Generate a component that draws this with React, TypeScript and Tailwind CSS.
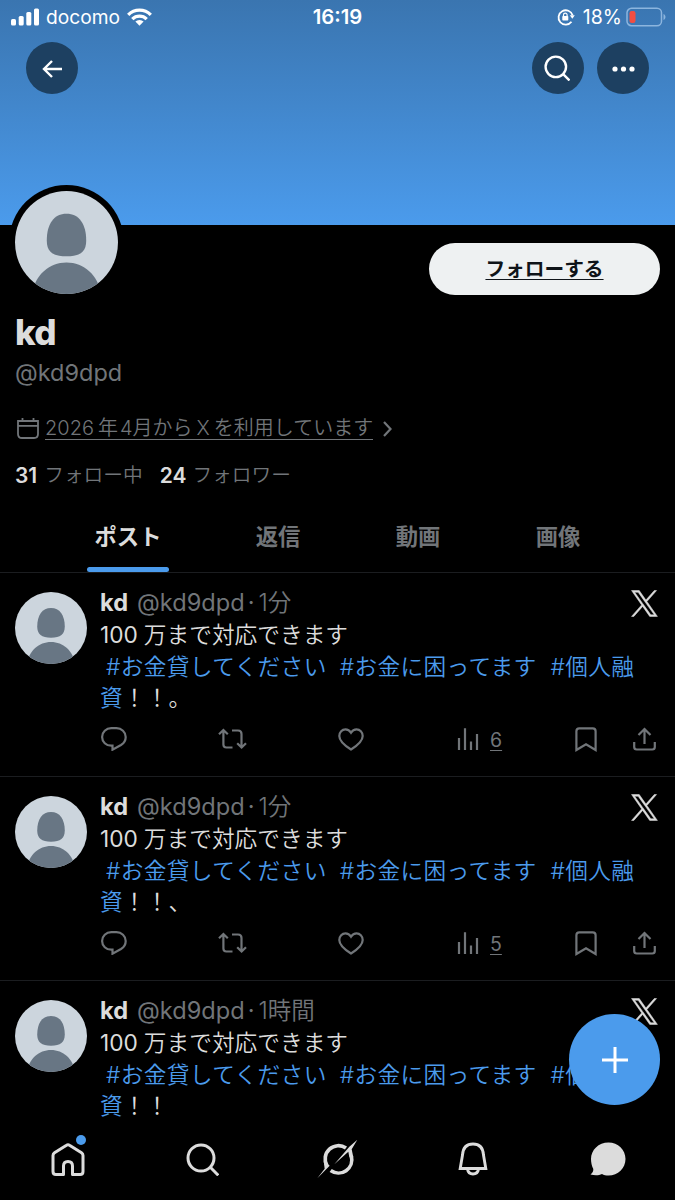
import React from 'react';

interface Post {
  id: number;
  time: string;
  tail: string;
  views: number;
}

const posts: Post[] = [
  { id: 1, time: '1分', tail: '！！。', views: 6 },
  { id: 2, time: '1分', tail: '！！、', views: 5 },
  { id: 3, time: '1時間', tail: '！！', views: 3 },
];

const tabs = ['ポスト', '返信', '動画', '画像'];

const Avatar: React.FC<{ className: string }> = ({ className }) => (
  <svg viewBox="0 0 103 103" className={className}>
    <defs>
      <clipPath id="face">
        <circle cx="51.5" cy="51.5" r="51.5" />
      </clipPath>
    </defs>
    <g clipPath="url(#face)">
      <rect width="103" height="103" fill="#ccd5dd" />
      <path d="M51.5 22.8C64 22.8 71.200 33 71.200 49.500C71.200 61 65 65.300 51.500 65.300S31.800 61 31.800 49.500C31.800 33 39 22.800 51.500 22.800z" fill="#687684" />
      <path d="M17 103C20 84 34 71.500 51.500 71.500S83 84 86 103z" fill="#687684" />
    </g>
  </svg>
);

const SearchIcon: React.FC<{ className: string; weight: number }> = ({ className, weight }) => (
  <svg viewBox="0 0 33 33" className={className} fill="none" stroke="currentColor" strokeWidth={weight}>
    <circle cx="15" cy="15" r="13" />
    <path d="M24.300 24.300l8 8" />
  </svg>
);

const StatusBar: React.FC = () => (
  <div className="grid h-9 grid-cols-3 items-center pb-0.5 text-white">
    <div className="flex items-center pl-[11px]">
      <svg viewBox="0 0 28 18" className="h-[18px] w-7" fill="currentColor">
        <rect x="0" y="11" width="5" height="6.500" rx="1.500" />
        <rect x="7.700" y="8" width="5" height="9.500" rx="1.500" />
        <rect x="15.300" y="4" width="5" height="13.500" rx="1.500" />
        <rect x="23" y="0.500" width="5" height="17" rx="1.500" />
      </svg>
      <span className="ml-[7px] text-[19.200px] leading-6">docomo</span>
      <svg viewBox="0 0 25 18" className="ml-[7px] h-[18px] w-[25px]" fill="none" stroke="currentColor" strokeWidth="3.300">
        <path d="M1.200 6.800a16 16 0 0 1 22.600 0" />
        <path d="M5.300 11.100a10.200 10.200 0 0 1 14.400 0" />
        <path d="M12.500 17.800l-4.100-4.200a5.800 5.800 0 0 1 8.200 0z" fill="currentColor" stroke="none" />
      </svg>
    </div>
    <div className="text-center text-[20.300px] font-semibold leading-6">16:19</div>
    <div className="flex items-center justify-end pr-[9px]">
      <svg viewBox="0 0 18 18" className="h-[18px] w-[18px]" fill="none" stroke="currentColor" strokeWidth="1.800">
        <path d="M14.500 13.800A7.200 7.200 0 1 1 15.600 7.300" />
        <path d="M12.800 7.200h5l-2.500 3.600z" fill="currentColor" stroke="none" />
        <rect x="5.300" y="8" width="6" height="4.500" rx="0.800" fill="currentColor" stroke="none" />
        <path d="M6.500 8.500V6.900a1.800 1.800 0 0 1 3.600 0v1.600" strokeWidth="1.200" />
      </svg>
      <span className="ml-2 text-[19.500px] leading-6">18%</span>
      <svg viewBox="0 0 40 20" className="ml-1 h-5 w-10" fill="none">
        <rect x="1" y="1.300" width="34.500" height="17.400" rx="4.500" stroke="#8cb5de" strokeWidth="1.500" />
        <rect x="3.500" y="4" width="6" height="12" rx="2.300" fill="#f24e42" />
        <path d="M37.500 7c2.600 1 2.600 5 0 6z" fill="#8cb5de" />
      </svg>
    </div>
  </div>
);

const Banner: React.FC = () => (
  <div className="h-[225px] bg-gradient-to-b from-[#3a75b0] to-[#4b9bec]">
    <StatusBar />
    <div className="flex justify-between px-[26px] pt-1.5 text-white">
      <button className="flex h-[52px] w-[52px] items-center justify-center rounded-full bg-[#1d4061]">
        <svg viewBox="0 0 20 18" className="mt-px h-[18px] w-5" fill="none" stroke="currentColor" strokeWidth="2.400">
          <path d="M20 9H1.800M10 1L2 9l8 8" />
        </svg>
      </button>
      <div className="flex gap-[13px]">
        <button className="flex h-[52px] w-[52px] items-center justify-center rounded-full bg-[#1d4061]">
          <SearchIcon className="mr-0.5 h-[26px] w-[26px]" weight={3} />
        </button>
        <button className="flex h-[52px] w-[52px] items-center justify-center rounded-full bg-[#1d4061]">
          <svg viewBox="0 0 23 6" className="mt-px h-1.5 w-[23px]" fill="currentColor">
            <circle cx="3" cy="3" r="2.600" />
            <circle cx="11.500" cy="3" r="2.600" />
            <circle cx="20" cy="3" r="2.600" />
          </svg>
        </button>
      </div>
    </div>
  </div>
);

const Profile: React.FC = () => (
  <section className="h-[290px] px-[15px]">
    <div className="flex h-[84px] items-start justify-between">
      <div className="relative -ml-1.5 -mt-10 rounded-full bg-black p-1.5">
        <Avatar className="h-[103px] w-[103px]" />
      </div>
      <button className="mt-[18px] h-[52px] w-[231px] rounded-full bg-[#eef1f2] pt-0.5 text-[19.700px] font-bold text-[#0f1419] underline decoration-1 underline-offset-[3px]">
        フォローする
      </button>
    </div>
    <h1 className="mt-[3px] text-[35px] font-extrabold leading-10 tracking-[-0.8px] text-[#dcdcdc]">kd</h1>
    <p className="mt-[5px] text-[23.500px] leading-8 text-[#717579]">@kd9dpd</p>
    <div className="mt-6 flex h-8 items-center text-[#717579]">
      <svg viewBox="0 0 22 22" className="ml-0.5 h-[22px] w-[22px]" fill="none" stroke="currentColor" strokeWidth="1.800">
        <path d="M1 3h20v13q0 4-4 4H5q-4 0-4-4zM1 7.800h20M5.500 0v3M16.500 0v3" />
      </svg>
      <span className="-mt-px ml-1.5 whitespace-nowrap border-b border-[#717579] text-[20px] font-[350] leading-[22px]">
        2026<span className="ml-1">年</span><span className="ml-0.5">4</span>月から<span className="mx-1">X</span>を利用しています
      </span>
      <svg viewBox="0 0 9 16" className="-mt-px ml-2.5 h-4 w-[9px]" fill="none" stroke="currentColor" strokeWidth="2.200">
        <path d="M1 1l6.500 7L1 15" />
      </svg>
    </div>
    <div className="mt-[15px] flex h-8 items-center whitespace-nowrap text-[19.700px] text-[#717579]">
      <b className="text-[21px] font-semibold text-[#dcdcdc]">31</b>
      <span className="ml-[7px] font-[350]">フォロー中</span>
      <b className="ml-[17px] text-[21px] font-semibold text-[#dcdcdc]">24</b>
      <span className="ml-1.5 font-[350]">フォロワー</span>
    </div>
  </section>
);

const Tabs: React.FC = () => (
  <nav className="flex h-[58px] gap-[58px] border-b border-[#1b1d20] pl-[87px]">
    {tabs.map((tab, i) => (
      <div
        key={tab}
        className={
          i === 0
            ? 'mr-2.5 flex w-[82px] flex-col items-center justify-between text-[22.300px] font-bold text-[#dcdcdc]'
            : 'flex w-[82px] flex-col items-center justify-between text-[22.300px] font-bold text-[#717579]'
        }
      >
        <span className="mt-1.5 whitespace-nowrap leading-8">{tab}</span>
        {i === 0 && <span className="h-[5px] w-[82px] rounded-full bg-[#4b9bec]" />}
      </div>
    ))}
  </nav>
);

const XLogo: React.FC = () => (
  <svg viewBox="-0.500 -0.500 25 25" className="h-[27px] w-[27px]" fill="#dcdcdc" stroke="#dcdcdc" strokeWidth="0.500">
    <path d="M14.258 10.152L23.176 0h-2.113l-7.747 8.813L7.133 0H0l9.352 13.328L0 23.973h2.113l8.176-9.309 6.531 9.309h7.133zm-2.895 3.293l-.949-1.328L2.875 1.560h3.246l6.086 8.523.945 1.328 7.910 11.078h-3.246z" />
  </svg>
);

const Actions: React.FC<{ views: number }> = ({ views }) => (
  <div className="flex h-6 w-[557px] items-center text-[#717579]">
    <svg viewBox="0 0 26 24" className="ml-px h-6 w-[26px]" fill="none" stroke="currentColor" strokeWidth="2.200">
      <path d="M10.300 1.200h5.200c5 0 9.200 3.800 9.200 8.800 0 3.500-1.800 6.300-4.700 8l-8.500 4.700v-4h-1.200c-5.200 0-9.200-3.800-9.200-8.700s4-8.800 9.200-8.800z" />
    </svg>
    <svg viewBox="0 0 30 22" className="ml-[91px] h-[22px] w-[30px]" fill="none" stroke="currentColor" strokeWidth="2.200">
      <path d="M1 6.300l4.400-4.300 4.400 4.300M5.400 2.500v14q0 3 3 3H14.500M14 2.500h6q3.500 0 3.500 3.500v13.500M19.200 15.200l4.400 4.300 4.400-4.300" />
    </svg>
    <svg viewBox="0 0 26 23" className="ml-[90px] h-[23px] w-[26px]" fill="none" stroke="currentColor" strokeWidth="2.200">
      <path d="M13 21.500C5 16.500 1.300 12.500 1.300 8c0-4 2.900-6.700 6.100-6.700 2.400 0 4.400 1.300 5.600 3.300 1.200-2 3.200-3.300 5.600-3.300 3.200 0 6.100 2.700 6.100 6.700 0 4.500-3.700 8.500-11.700 13.500z" />
    </svg>
    <svg viewBox="0 0 22 24" className="ml-[93px] h-6 w-[22px]" fill="none" stroke="currentColor" strokeWidth="2.200">
      <path d="M2 23V11M8 23V1.300M14 23v-8.500M20 23V7" />
    </svg>
    <span className="ml-[11px] mt-0.5 w-4 text-[19.500px] leading-6 underline decoration-1 underline-offset-[3px]">{views}</span>
    <svg viewBox="0 0 22 25" className="ml-[69px] h-[25px] w-[22px]" fill="none" stroke="currentColor" strokeWidth="2.200">
      <path d="M1.400 23V4.200q0-2.800 2.800-2.800h13.600q2.800 0 2.800 2.800V23L11 17.200z" />
    </svg>
    <svg viewBox="0 0 23 24" className="ml-9 h-6 w-[23px]" fill="none" stroke="currentColor" strokeWidth="2.200">
      <path d="M11.500 17V2M5.500 8l6-6 6 6M1.200 15v5q0 2.500 2.500 2.500h15.600q2.500 0 2.500-2.500v-5" />
    </svg>
  </div>
);

const PostItem: React.FC<{ post: Post }> = ({ post }) => (
  <article className="flex h-[204px] shrink-0 border-b border-[#1b1d20] pl-[15px] pr-[17px] pt-[17px]">
    <Avatar className="mt-0.5 h-[72px] w-[72px] shrink-0" />
    <div className="ml-[13px] flex-1">
      <div className="flex h-[26px] justify-between">
        <div className="flex items-center whitespace-nowrap text-[23.600px] leading-6 text-[#717579]">
          <b className="font-bold text-[#dcdcdc]">kd</b>
          <span className="ml-[9px]">@kd9dpd</span>
          <span className="ml-[3px]">·</span>
          <span className="ml-1 text-[23.500px] font-[350]">{post.time}</span>
        </div>
        <XLogo />
      </div>
      <p className="mt-[3px] whitespace-nowrap text-[22.700px] font-[350] leading-[31.700px] text-[#dcdcdc]">
        <span className="mr-1.5 font-normal">100</span>万まで対応できます
        <br />
        <span className="tracking-[0.350px] text-[#4b9bec]">
          <span className="ml-1.5">#お金貸してください</span>
          <span className="ml-[13px]">#お金に困ってます</span>
          <span className="ml-3.5">#個人融</span>
          <br />資
        </span>
        {post.tail}
      </p>
      <div className="mt-[13px]">
        <Actions views={post.views} />
      </div>
    </div>
  </article>
);

const BottomNav: React.FC = () => (
  <nav className="absolute bottom-0 left-0 grid h-[81px] w-full grid-cols-5 justify-items-center bg-black pt-[23px] text-[#dcdcdc]">
    <div className="relative">
      <svg viewBox="0 0 34 34" className="h-[34px] w-[34px]" fill="none" stroke="currentColor" strokeWidth="3" strokeLinejoin="round">
        <path d="M2 13.500Q2 11.800 3.500 10.800L15.500 3.200q1.500-1 3 0L30.500 10.800q1.500 1 1.500 2.700V29.500q0 3-3 3H21.500V24q0-4.500-4.500-4.500T12.500 24v8.500H5q-3 0-3-3z" />
      </svg>
      <span className="absolute -right-px -top-[7px] h-2.5 w-2.5 rounded-full bg-[#4b9bec]" />
    </div>
    <SearchIcon className="mt-px h-[33px] w-[33px]" weight={3} />
    <svg viewBox="45 25 135 125" className="-mt-1 h-[42px] w-[45px]" fill="none" stroke="currentColor">
      <path d="M138 54.500A40 40 0 0 0 80.500 107M154 79A40 40 0 0 1 92 122" strokeWidth="11" />
      <path d="M103 103L148 51 172 30 155 58 160 82 148 82 145 66zM52 145L74 117 72 100 80 99 89 108z" fill="currentColor" stroke="none" />
    </svg>
    <svg viewBox="0 0 30 34" className="h-[34px] w-[30px]" fill="none" stroke="currentColor" strokeWidth="2.900">
      <path d="M4.500 13Q5.200 2 15 2t10.500 11L27.800 26.500H2.200zM9.500 27c.5 3.500 2.700 5 5.500 5s5-1.500 5.500-5" />
    </svg>
    <svg viewBox="0 0 36 34" className="h-[34px] w-9" fill="currentColor">
      <path d="M18.500 0.500c9.500 0 17 7.400 17 16.500s-7.500 16.500-17 16.500c-2.500 0-4.800-.5-6.500-1.500-3 1.500-7 1.800-11.500.5 2-1.500 3-3.500 2.800-5.500C1.800 24 1 20.500 1 17 1 8 8.500.5 18.500.5z" />
    </svg>
  </nav>
);

const App: React.FC = () => {
  return (
    <div className="relative h-[1200px] w-[675px] overflow-hidden bg-black font-['Inter','Noto_Sans_CJK_JP',sans-serif]" lang="ja">
      <Banner />
      <Profile />
      <Tabs />
      <main className="flex flex-col">
        {posts.map((post) => (
          <PostItem key={post.id} post={post} />
        ))}
      </main>
      <button className="absolute bottom-[95px] right-[15px] flex h-[91px] w-[91px] items-center justify-center rounded-full bg-[#4b9bec]">
        <svg viewBox="0 0 26 26" className="h-[26px] w-[26px]" stroke="#fff" strokeWidth="3">
          <path d="M13 0v26M0 13h26" />
        </svg>
      </button>
      <BottomNav />
    </div>
  );
};

export default App;
